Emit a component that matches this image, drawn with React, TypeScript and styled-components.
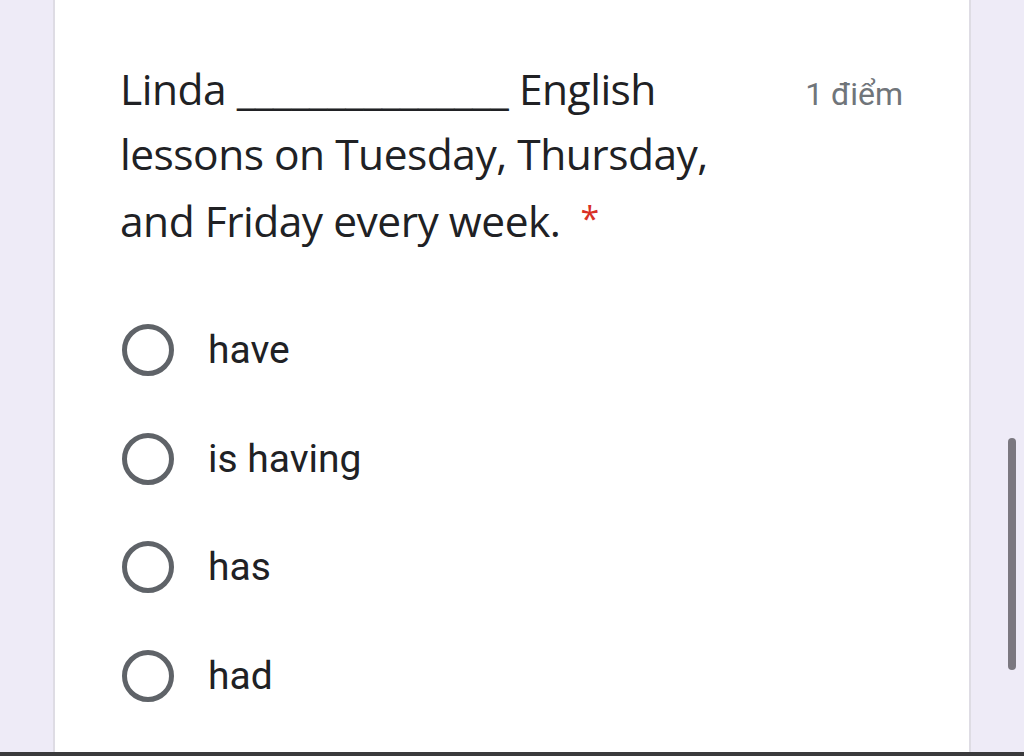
import styled, { createGlobalStyle } from 'styled-components';

const GlobalStyle = createGlobalStyle`
  html, body {
    margin: 0;
    padding: 0;
    background: #eeebf7;
  }
`;

const Page = styled.div`
  position: relative;
  height: 756px;
  overflow: hidden;
  background: #eeebf7;
  border-bottom: 4px solid #3a3a3c;
  box-sizing: border-box;
`;

const Card = styled.div`
  margin: -20px 0 0 53px;
  width: 918px;
  height: 800px;
  box-sizing: border-box;
  background: #ffffff;
  border: 2px solid #dedce4;
  border-radius: 18px;
  padding: 74px 66px 0 65px;
`;

const Header = styled.div`
  display: flex;
  justify-content: space-between;
  align-items: baseline;
`;

const Title = styled.div`
  width: 630px;
  font-family: 'Open Sans', 'Roboto', sans-serif;
  font-size: 42.5px;
  line-height: 65px;
  letter-spacing: -0.5px;
  color: #202124;
`;

const Required = styled.span`
  color: #d93025;
  font-size: 34px;
  margin-left: 20px;
  vertical-align: 6px;
`;

const Points = styled.div`
  font-family: 'Roboto', sans-serif;
  font-size: 32px;
  color: #70757a;
`;

const Options = styled.div`
  display: flex;
  flex-direction: column;
  margin-top: 43px;
`;

const Option = styled.label`
  display: flex;
  align-items: center;
  gap: 34px;
  height: 108.5px;
  padding-left: 2px;
  cursor: pointer;
`;

const Radio = styled.span`
  width: 52px;
  height: 52px;
  box-sizing: border-box;
  border: 5px solid #5f6368;
  border-radius: 50%;
  flex-shrink: 0;
`;

const OptionText = styled.span`
  font-family: 'Roboto', sans-serif;
  font-size: 39px;
  color: #202124;
`;

const Scrollbar = styled.div`
  position: absolute;
  left: 1008px;
  top: 438px;
  width: 8px;
  height: 232px;
  border-radius: 4px;
  background: #7b7880;
`;

const choices = ['have', 'is having', 'has', 'had'];

function App() {
  return (
    <>
      <GlobalStyle />
      <Page>
        <Card>
          <Header>
            <Title>
              Linda _______________ English lessons on Tuesday, Thursday, and Friday every week.
              <Required>*</Required>
            </Title>
            <Points>1 điểm</Points>
          </Header>
          <Options>
            {choices.map((c) => (
              <Option key={c}>
                <Radio />
                <OptionText>{c}</OptionText>
              </Option>
            ))}
          </Options>
        </Card>
        <Scrollbar />
      </Page>
    </>
  );
}

export default App;
